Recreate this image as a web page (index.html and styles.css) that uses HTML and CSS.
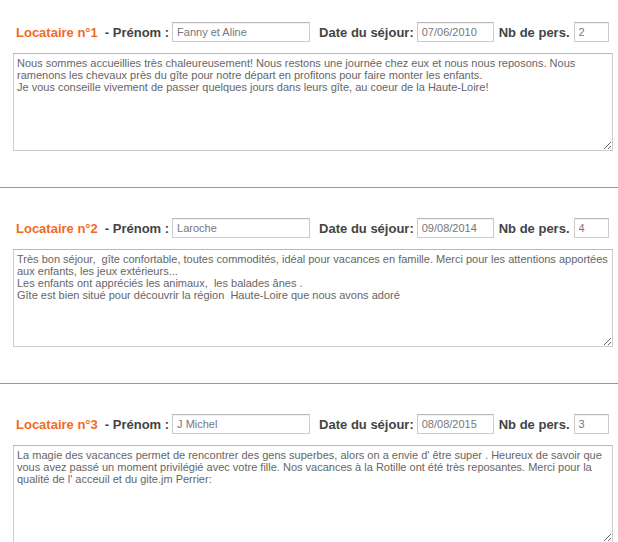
FILE: index.html
```html
<!DOCTYPE html>
<html lang="fr">
<head>
    <meta charset="UTF-8">
    <title>Livre d'or - La Rotille</title>
    <link rel="stylesheet" href="styles.css">
</head>
<body>

    <div class="entry">
        <div class="entry-head">
            <span class="entry-num">Locataire n°1</span>
            <label class="entry-label label-name">- Prénom :</label>
            <input type="text" class="field field-name" value="Fanny et Aline">
            <label class="entry-label label-date">Date du séjour:</label>
            <input type="text" class="field field-date" value="07/06/2010">
            <label class="entry-label label-pers">Nb de pers.</label>
            <input type="text" class="field field-pers" value="2">
        </div>
        <textarea class="entry-text">Nous sommes accueillies très chaleureusement! Nous restons une journée chez eux et nous nous reposons. Nous ramenons les chevaux près du gîte pour notre départ en profitons pour faire monter les enfants.
Je vous conseille vivement de passer quelques jours dans leurs gîte, au coeur de la Haute-Loire!</textarea>
    </div>

    <hr class="sep">

    <div class="entry">
        <div class="entry-head">
            <span class="entry-num">Locataire n°2</span>
            <label class="entry-label label-name">- Prénom :</label>
            <input type="text" class="field field-name" value="Laroche">
            <label class="entry-label label-date">Date du séjour:</label>
            <input type="text" class="field field-date" value="09/08/2014">
            <label class="entry-label label-pers">Nb de pers.</label>
            <input type="text" class="field field-pers" value="4">
        </div>
        <textarea class="entry-text">Très bon séjour,  gîte confortable, toutes commodités, idéal pour vacances en famille. Merci pour les attentions apportées aux enfants, les jeux extérieurs...
Les enfants ont appréciés les animaux,  les balades ânes .
Gîte est bien situé pour découvrir la région  Haute-Loire que nous avons adoré</textarea>
    </div>

    <hr class="sep">

    <div class="entry">
        <div class="entry-head">
            <span class="entry-num">Locataire n°3</span>
            <label class="entry-label label-name">- Prénom :</label>
            <input type="text" class="field field-name" value="J Michel">
            <label class="entry-label label-date">Date du séjour:</label>
            <input type="text" class="field field-date" value="08/08/2015">
            <label class="entry-label label-pers">Nb de pers.</label>
            <input type="text" class="field field-pers" value="3">
        </div>
        <textarea class="entry-text">La magie des vacances permet de rencontrer des gens superbes, alors on a envie d' être super . Heureux de savoir que vous avez passé un moment privilégié avec votre fille. Nos vacances à la Rotille ont été très reposantes. Merci pour la qualité de l' acceuil et du gite.jm Perrier:</textarea>
    </div>

</body>
</html>
```

FILE: styles.css
```css
/* Livre d'or */
body {
    margin: 0;
    padding: 0;
    background-color: #fff;
    font-family: "Liberation Sans", Arial, sans-serif;
    color: #444;
}

.entry {
    padding: 30px 0 36px 13px;
}

.entry:first-child {
    padding-top: 22px;
}

.entry-head {
    display: flex;
    align-items: center;
    height: 20px;
    padding-left: 3px;
}

.entry-num {
    color: #f26a1e;
    font-size: 13px;
    font-weight: bold;
    margin-right: 7px;
}

.entry-label {
    font-size: 13px;
    font-weight: bold;
    color: #444;
    margin-right: 3px;
}

.label-date {
    margin-left: 9px;
}

.label-pers {
    margin-left: 5px;
    margin-right: 4px;
}

.field {
    box-sizing: border-box;
    height: 20px;
    padding: 0 4px;
    border: 1px solid #ccc;
    border-top-color: #b8b8b8;
    box-shadow: inset 0 1px 1px rgba(0, 0, 0, 0.06);
    font-family: "Liberation Sans", Arial, sans-serif;
    font-size: 11px;
    color: #777;
    background: #fff;
    outline: none;
}

.field-name {
    width: 138px;
}

.field-date {
    width: 77px;
}

.field-pers {
    width: 35px;
}

.entry-text {
    display: block;
    box-sizing: border-box;
    width: 600px;
    height: 98px;
    margin: 11px 0 0 0;
    padding: 3px;
    border: 1px solid #ccc;
    border-top-color: #b8b8b8;
    font-family: "Liberation Sans", Arial, sans-serif;
    font-size: 11px;
    line-height: 12px;
    color: #666;
    background: #fff;
}

.sep {
    margin: 0;
    border: 0;
    border-top: 1px solid #999;
}
```
